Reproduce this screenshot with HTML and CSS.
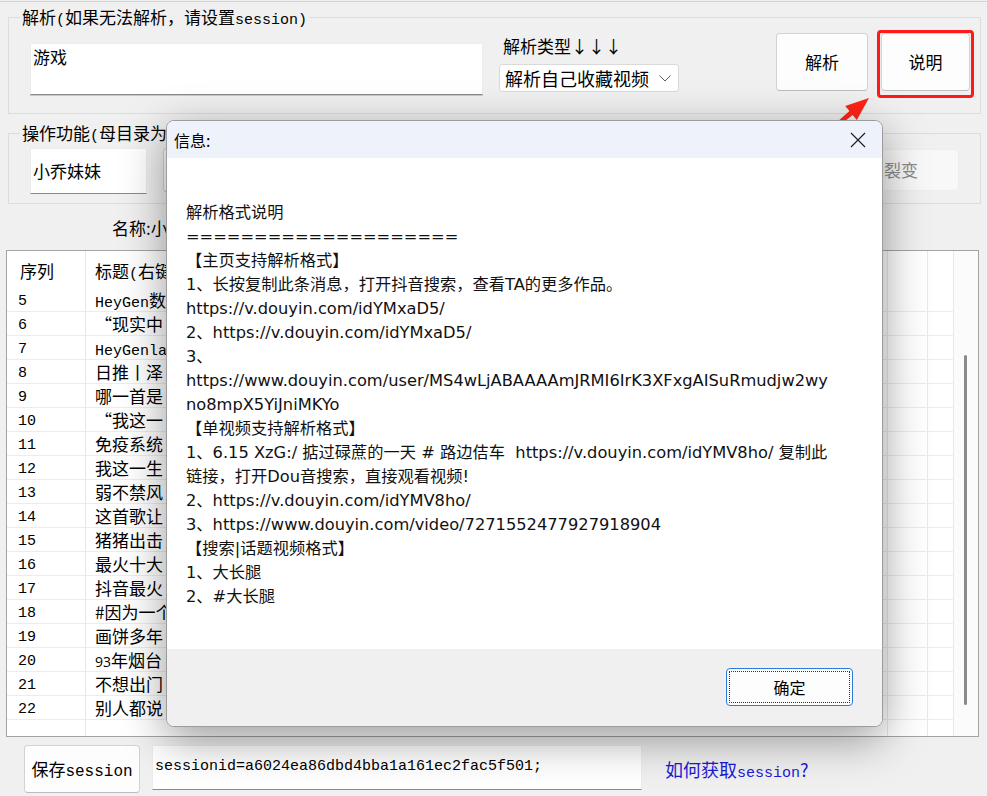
FILE: index.html
```html
<!DOCTYPE html>
<html lang="zh-CN">
<head>
<meta charset="utf-8">
<title>解析</title>
<link rel="stylesheet" href="styles.css">
</head>
<body>
<div class="app">
  <fieldset class="group g1">
    <legend>解析<span class="en">(</span>如果无法解析，请设置<span class="en">session)</span></legend>
    <div class="g1-row">
      <div class="textarea">游戏</div>
      <div class="type-col">
        <div class="type-label">解析类型↓↓↓</div>
        <div class="select"><span>解析自己收藏视频</span>
          <svg class="chev" width="12" height="7" viewBox="0 0 12 7"><path d="M0.5 0.5 L6 6 L11.5 0.5" fill="none" stroke="#606060" stroke-width="1"/></svg>
        </div>
      </div>
      <button class="btn btn-parse">解析</button>
      <button class="btn btn-help">说明</button>
    </div>
  </fieldset>

  <fieldset class="group g2">
    <legend>操作功能<span class="en">(</span>母目录为当前目录<span class="en">)</span></legend>
    <div class="g2-row">
      <div class="name-input">小乔妹妹</div>
      <button class="btn btn-op">打开目录</button>
      <button class="btn btn-op">下载选中</button>
      <button class="btn btn-op">全部下载</button>
      <button class="btn btn-split">裂变</button>
    </div>
  </fieldset>

  <div class="name-row">名称:小乔妹妹</div>

  <div class="table">
    <div class="grid">
      <div class="row head"><div class="c">序列</div><div class="c t">标题<span class="en">(</span>右键可复制<span class="en">)</span></div><div class="c"></div><div class="c"></div></div>
      <div class="row"><div class="c n">5</div><div class="c t"><span class="en">HeyGen</span>数字人</div><div class="c"></div><div class="c"></div></div>
      <div class="row"><div class="c n">6</div><div class="c t">“现实中</div><div class="c"></div><div class="c"></div></div>
      <div class="row"><div class="c n">7</div><div class="c t"><span class="en">HeyGenla</span></div><div class="c"></div><div class="c"></div></div>
      <div class="row"><div class="c n">8</div><div class="c t">日推丨泽</div><div class="c"></div><div class="c"></div></div>
      <div class="row"><div class="c n">9</div><div class="c t">哪一首是</div><div class="c"></div><div class="c"></div></div>
      <div class="row"><div class="c n">10</div><div class="c t">“我这一</div><div class="c"></div><div class="c"></div></div>
      <div class="row"><div class="c n">11</div><div class="c t">免疫系统</div><div class="c"></div><div class="c"></div></div>
      <div class="row"><div class="c n">12</div><div class="c t">我这一生</div><div class="c"></div><div class="c"></div></div>
      <div class="row"><div class="c n">13</div><div class="c t">弱不禁风</div><div class="c"></div><div class="c"></div></div>
      <div class="row"><div class="c n">14</div><div class="c t">这首歌让</div><div class="c"></div><div class="c"></div></div>
      <div class="row"><div class="c n">15</div><div class="c t">猪猪出击</div><div class="c"></div><div class="c"></div></div>
      <div class="row"><div class="c n">16</div><div class="c t">最火十大</div><div class="c"></div><div class="c"></div></div>
      <div class="row"><div class="c n">17</div><div class="c t">抖音最火</div><div class="c"></div><div class="c"></div></div>
      <div class="row"><div class="c n">18</div><div class="c t">#因为一个</div><div class="c"></div><div class="c"></div></div>
      <div class="row"><div class="c n">19</div><div class="c t">画饼多年</div><div class="c"></div><div class="c"></div></div>
      <div class="row"><div class="c n">20</div><div class="c t"><span class="sm">93</span>年烟台</div><div class="c"></div><div class="c"></div></div>
      <div class="row"><div class="c n">21</div><div class="c t">不想出门</div><div class="c"></div><div class="c"></div></div>
      <div class="row"><div class="c n">22</div><div class="c t">别人都说</div><div class="c"></div><div class="c"></div></div>
      <div class="row filler"><div class="c"></div><div class="c"></div><div class="c"></div><div class="c"></div></div>
    </div>
    <div class="vscroll"><div class="thumb"></div></div>
  </div>

  <div class="bottom">
    <button class="btn btn-save">保存<span class="en">session</span></button>
    <div class="session-input en">sessionid=a6024ea86dbd4bba1a161ec2fac5f501;</div>
    <a class="help-link">如何获取<span class="en">session</span>?</a>
  </div>
</div>

<div class="highlight"></div>
<svg class="arrow" width="987" height="796" viewBox="0 0 987 796">
  <polygon points="798.7,156.6 849.4,111.1 845.2,106.1 869,98 856.8,119.9 852.6,114.9 799.3,157.4" fill="#ff2416"/>
</svg>

<div class="dialog">
  <div class="dlg-title">
    <span>信息:</span>
    <svg class="close" width="16" height="16" viewBox="0 0 16 16"><path d="M1 1 L15 15 M15 1 L1 15" stroke="#1a1a1a" stroke-width="1.1" fill="none"/></svg>
  </div>
  <div class="dlg-body">
    <div class="ln">解析格式说明</div>
    <div class="ln">====================</div>
    <div class="ln">【主页支持解析格式】</div>
    <div class="ln">1、长按复制此条消息，打开抖音搜索，查看TA的更多作品。</div>
    <div class="ln">https://v.douyin.com/idYMxaD5/</div>
    <div class="ln">2、https://v.douyin.com/idYMxaD5/</div>
    <div class="ln">3、</div>
    <div class="ln">https://www.douyin.com/user/MS4wLjABAAAAmJRMI6IrK3XFxgAISuRmudjw2wy</div>
    <div class="ln">no8mpX5YiJniMKYo</div>
    <div class="ln">【单视频支持解析格式】</div>
    <div class="ln">1、6.15 XzG:/ 掂过碌蔗的一天 # 路边佶车  https://v.douyin.com/idYMV8ho/ 复制此</div>
    <div class="ln">链接，打开Dou音搜索，直接观看视频!</div>
    <div class="ln">2、https://v.douyin.com/idYMV8ho/</div>
    <div class="ln">3、https://www.douyin.com/video/7271552477927918904</div>
    <div class="ln">【搜索|话题视频格式】</div>
    <div class="ln">1、大长腿</div>
    <div class="ln">2、#大长腿</div>
  </div>
  <div class="dlg-foot">
    <button class="ok">确定</button>
  </div>
</div>
</body>
</html>
```

FILE: styles.css
```css
* { box-sizing: border-box; }
html, body { margin: 0; padding: 0; }
body {
  width: 987px;
  height: 796px;
  overflow: hidden;
  position: relative;
  background: #f0f0f0;
  font-family: "Noto Sans CJK SC", sans-serif;
  color: #000;
}
.en { font-family: "Liberation Mono", "Noto Sans CJK SC", monospace; font-size: 15px; line-height: 1; }
.sm { font-family: "Open Sans", sans-serif; font-size: 14px; line-height: 1; }

.app {
  margin-top: 1px;
  border-top: 1px solid #d2d2d2;
  display: flex;
  flex-direction: column;
}

.group {
  margin: 0 6px 0 8px;
  padding: 0;
  border: 1px solid #dcdcdc;
  min-width: 0;
}
.group legend {
  margin-left: 11px;
  padding: 0 2px;
  font-size: 17px;
  line-height: 20px;
  height: 20px;
  color: #000;
}
.g1 { margin-top: 5px; }
.g1-row {
  height: 86px;
  display: flex;
  align-items: flex-start;
  padding-left: 21px;
}
.textarea {
  margin-top: 16px;
  width: 453px;
  height: 52px;
  background: #fff;
  border: 1px solid #ececec;
  border-bottom: 1px solid #8a8a8a;
  box-shadow: 0 1px 0 #c8c8c8;
  font-size: 17px;
  line-height: 20px;
  padding: 3px 0 0 2px;
}
.type-col {
  margin-left: 16px;
  margin-top: 9px;
  display: flex;
  flex-direction: column;
}
.type-label {
  padding-left: 4px;
  font-size: 17px;
  line-height: 20px;
  height: 28px;
}
.select {
  width: 180px;
  height: 28px;
  background: #fff;
  border: 1px solid #dadada;
  border-radius: 3px;
  display: flex;
  align-items: center;
  padding-left: 5px;
  font-size: 18px;
  line-height: 20px;
}
.select span { flex: 1; }
.chev { margin-right: 7px; }

.btn {
  font-family: "Noto Sans CJK SC", sans-serif;
  background: #fdfdfd;
  border: 1px solid #d3d3d3;
  border-bottom-color: #bdbdbd;
  border-radius: 4px;
  font-size: 17px;
  line-height: 20px;
  color: #000;
  padding: 0;
}
.btn-parse {
  margin-left: 97px;
  margin-top: 6px;
  width: 92px;
  height: 58px;
}
.btn-help {
  margin-left: 13px;
  margin-top: 6px;
  width: 89px;
  height: 58px;
}

.g2 { margin-top: 9px; }
.g2-row {
  height: 60px;
  display: flex;
  align-items: flex-start;
  padding-left: 21px;
}
.name-input {
  margin-top: 5px;
  width: 117px;
  height: 46px;
  background: #fff;
  border: 1px solid #ececec;
  border-bottom: 1px solid #8a8a8a;
  font-size: 17px;
  line-height: 20px;
  padding: 12px 0 0 2px;
}
.btn-op {
  margin-top: 5px;
  margin-left: 16px;
  width: 110px;
  height: 44px;
}
.btn-split {
  margin-top: 6px;
  margin-left: auto;
  margin-right: 21px;
  width: 116px;
  height: 42px;
  background: #f8f8f8;
  border-color: #ececec;
  color: #8a8a8a;
}

.name-row {
  height: 46px;
  padding: 14px 0 0 112px;
  font-size: 17px;
  line-height: 20px;
}

.table {
  margin: 0 8px 0 6px;
  height: 487px;
  border: 1px solid #a3a3a3;
  background: #fff;
  display: flex;
}
.grid {
  width: 947px;
  display: flex;
  flex-direction: column;
}
.row {
  display: grid;
  grid-template-columns: 79px 802px 40px 26px;
  height: 24px;
  flex-shrink: 0;
  border-bottom: 1px solid #ececec;
}
.row.head {
  height: 37px;
  border-bottom: none;
}
.row.filler { flex: 1 1 auto; border-bottom: none; }
.c {
  border-right: 1px solid #e8e8e8;
  font-size: 17px;
  line-height: 23px;
  white-space: nowrap;
  overflow: hidden;
}
.head .c { padding-top: 10px; line-height: 20px; }
.head .c:first-child { padding-left: 13px; }
.c.n { padding-left: 11px; padding-top: 2px; font-family: "Liberation Mono", monospace; font-size: 15px; }
.c.t { padding-left: 9px; }
.vscroll {
  flex: 1;
  background: #fbfbfb;
  position: relative;
}
.thumb {
  position: absolute;
  left: 10px;
  top: 104px;
  width: 3px;
  height: 350px;
  border-radius: 2px;
  background: #8a8a8a;
}

.bottom {
  margin-top: 8px;
  display: flex;
  align-items: flex-start;
  padding-left: 24px;
}
.btn-save {
  width: 116px;
  height: 48px;
  font-size: 17px;
}
.btn-save .en { font-size: 16px; }
.session-input {
  margin-left: 12px;
  width: 490px;
  height: 45px;
  background: #fff;
  border: 1px solid #ececec;
  border-bottom: 1px solid #8a8a8a;
  padding: 11px 0 0 2px;
  line-height: 20px;
}
.help-link {
  margin-left: 23px;
  margin-top: 14px;
  font-size: 18px;
  line-height: 20px;
  color: #1a1ad8;
}
.help-link .en { font-size: 15px; }

.highlight {
  position: absolute;
  left: 877px;
  top: 30px;
  width: 97px;
  height: 68px;
  border: 3px solid #ff1a1a;
  border-radius: 4px;
}
.arrow {
  position: absolute;
  left: 0;
  top: 0;
  pointer-events: none;
}

.dialog {
  position: absolute;
  left: 166px;
  top: 120px;
  width: 717px;
  height: 607px;
  border: 1px solid #9c9c9c;
  border-radius: 8px;
  overflow: hidden;
  background: #fff;
  box-shadow: 0 12px 45px rgba(0, 0, 0, 0.4);
  display: flex;
  flex-direction: column;
}
.dlg-title {
  flex-shrink: 0;
  height: 37px;
  background: #eef2fa;
  display: flex;
  align-items: center;
  padding-left: 7px;
  font-size: 16px;
  line-height: 20px;
}
.dlg-title span { flex: 1; }
.close { margin-right: 16px; margin-top: 1px; }
.dlg-body {
  flex: 1 1 auto;
  min-height: 0;
  padding: 43px 0 0 19px;
  font-family: "DejaVu Sans", "Noto Sans CJK SC", sans-serif;
  font-size: 16.25px;
  color: #111;
}
.ln {
  height: 24px;
  line-height: 24px;
  white-space: pre;
}
.dlg-foot {
  flex-shrink: 0;
  height: 77px;
  background: #f0f0f0;
  display: flex;
  justify-content: flex-end;
  align-items: flex-start;
  padding: 19px 29px 0 0;
}
.ok {
  width: 127px;
  height: 38px;
  background: #fdfdfd;
  border: 1px solid #2b7bd8;
  border-radius: 4px;
  outline: 1px dotted #333;
  outline-offset: -4px;
  font-family: "Noto Sans CJK SC", sans-serif;
  font-size: 16px;
  line-height: 20px;
  color: #000;
  padding: 0;
}
```
